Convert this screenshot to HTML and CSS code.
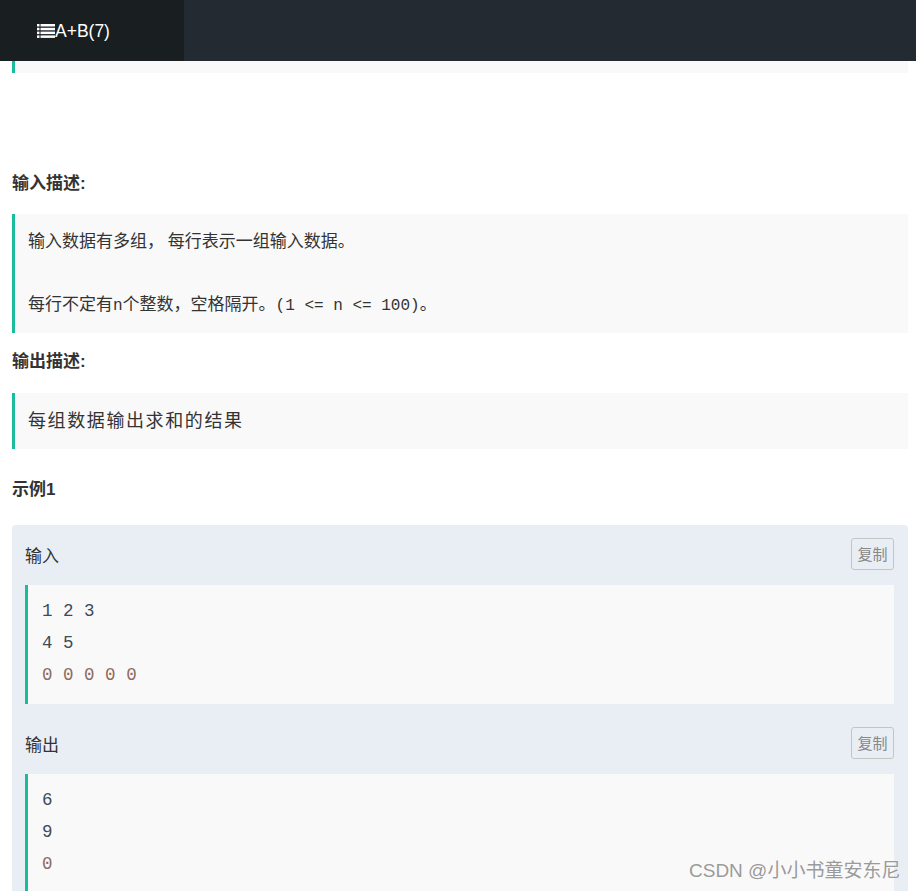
FILE: index.html
```html
<!DOCTYPE html>
<html lang="zh-CN">
<head>
<meta charset="utf-8">
<title>A+B(7)</title>
<link rel="stylesheet" href="styles.css">
</head>
<body>
<header class="topbar">
  <div class="tab">
    <svg class="tab-icon" width="18" height="14" viewBox="0 0 18 14" aria-hidden="true">
      <g fill="#fff">
        <rect x="0" y="0" width="2.5" height="2.5"/><rect x="3.5" y="0" width="14.5" height="2.5"/>
        <rect x="0" y="3.8" width="2.5" height="2.5"/><rect x="3.5" y="3.8" width="14.5" height="2.5"/>
        <rect x="0" y="7.6" width="2.5" height="2.5"/><rect x="3.5" y="7.6" width="14.5" height="2.5"/>
        <rect x="0" y="11.4" width="2.5" height="2.5"/><rect x="3.5" y="11.4" width="14.5" height="2.5"/>
      </g>
    </svg>
    <span class="tab-title">A+B(7)</span>
  </div>
  <div class="bar-rest"></div>
</header>

<main class="content">
  <div class="quote prev"></div>

  <h3 class="heading h-in">输入描述:</h3>
  <div class="quote desc-in">
    <p class="para first">输入数据有多组，&nbsp;每行表示一组输入数据。</p>
    <p class="para">每行不定有<span class="mono">n</span>个整数，空格隔开。<span class="mono">(1 &lt;= n &lt;= 100)</span>。</p>
  </div>

  <h3 class="heading h-out">输出描述:</h3>
  <div class="quote desc-out">
    <p class="para wide">每组数据输出求和的结果</p>
  </div>

  <h3 class="heading h-ex">示例1</h3>
  <section class="example">
    <div class="ex-head">
      <span class="ex-label">输入</span>
      <button class="copy">复制</button>
    </div>
    <pre class="code"><span class="n">1</span> <span class="n">2</span> <span class="n">3</span>
<span class="n">4</span> <span class="n">5</span>
<span class="z">0</span> <span class="z">0</span> <span class="z">0</span> <span class="z">0</span> <span class="z">0</span></pre>

    <div class="ex-head">
      <span class="ex-label">输出</span>
      <button class="copy">复制</button>
    </div>
    <pre class="code"><span class="n">6</span>
<span class="n">9</span>
<span class="z">0</span>
</pre>
  </section>
</main>

<div class="watermark">CSDN @小小书童安东尼</div>
</body>
</html>
```

FILE: styles.css
```css
* { box-sizing: border-box; }

html, body {
  margin: 0;
  padding: 0;
  background: #fff;
  overflow: hidden;
}

body {
  font-family: "Liberation Sans", Arial, "Noto Sans CJK SC", sans-serif;
  color: #333;
  height: 891px;
}

.topbar {
  display: flex;
  height: 61px;
}

.tab {
  width: 184px;
  background: #191e21;
  display: flex;
  align-items: center;
  padding-left: 37px;
  color: #fff;
}

.tab-icon {
  display: block;
  margin-top: 1px;
}

.tab-title {
  font-size: 17.5px;
  line-height: 20px;
}

.bar-rest {
  flex: 1;
  background: #242a31;
}

.content {
  padding: 0 8px 0 12px;
}

.quote {
  background: #f9f9f9;
  border-left: 3px solid #1abc9c;
}

.prev {
  height: 12px;
}

.heading {
  margin: 0;
  font-size: 17px;
  line-height: 24px;
  font-weight: bold;
  color: #333;
  font-family: "Liberation Sans", Arial, "Noto Sans CJK SC", sans-serif;
}

.h-in { margin-top: 99px; margin-bottom: 18px; }
.h-out { margin-top: 17px; margin-bottom: 19px; }
.h-ex { margin-top: 29px; margin-bottom: 23px; }

.desc-in,
.desc-out {
  padding: 10px 13px 14px;
}

.para {
  margin: 0;
  font-size: 17px;
  line-height: 32px;
  height: 32px;
  color: #333;
  font-family: "Noto Sans CJK SC", sans-serif;
}

.para.first {
  margin-bottom: 31px;
}

.para.wide {
  font-size: 18px;
  letter-spacing: 1.6px;
}

.mono {
  font-family: "Liberation Mono", "Courier New", monospace;
  font-size: 16px;
  line-height: 1;
}

.example {
  background: #e9eef5;
  border-radius: 4px;
  padding: 0 14px 10px 13px;
}

.ex-head {
  height: 60px;
  display: flex;
  align-items: center;
  justify-content: space-between;
}

.ex-label {
  font-family: "Noto Sans CJK SC", sans-serif;
  font-size: 17px;
  color: #333;
  margin-top: -2px;
}

.copy {
  width: 43px;
  height: 32px;
  padding: 0;
  border: 1px solid #c4c4c4;
  border-radius: 3px;
  background: transparent;
  color: #888;
  font-family: "Noto Sans CJK SC", sans-serif;
  font-size: 15px;
  line-height: 30px;
  margin-top: -2px;
}

.code {
  margin: 0 0 10px;
  background: #f9f9f9;
  border-left: 3px solid #1abc9c;
  padding: 10px 14px 13px;
  font-family: "Liberation Mono", "Courier New", monospace;
  font-size: 17.5px;
  line-height: 32px;
  color: #444;
  white-space: pre;
}

.code .n { color: #3e4a5a; }
.code .z { color: #8d6b5e; }

.watermark {
  position: absolute;
  left: 689px;
  top: 859px;
  font-size: 19px;
  line-height: 24px;
  color: #9a9a9a;
  text-shadow: 0 0 1px #fff;
  font-family: "Liberation Sans", Arial, "Noto Sans CJK SC", sans-serif;
  white-space: nowrap;
}
```
